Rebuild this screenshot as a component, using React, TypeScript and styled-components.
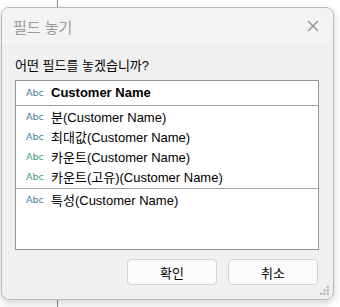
import React from "react";
import styled, { createGlobalStyle } from "styled-components";

const GlobalStyle = createGlobalStyle`
  html, body {
    margin: 0;
    padding: 0;
    background: #ffffff;
    width: 340px;
    height: 307px;
    overflow: hidden;
    font-family: "Liberation Sans", "Noto Sans CJK KR", sans-serif;
  }
`;

const FONT = `"Liberation Sans", "Noto Sans CJK KR", sans-serif`;

const Stage = styled.div`
  position: relative;
  width: 340px;
  height: 307px;
  padding: 7px 0 0 1px;
  box-sizing: border-box;
`;

const BackLine = styled.div`
  position: absolute;
  left: 57px;
  top: 0;
  bottom: 0;
  width: 1px;
  background: #8c8c8c;
`;

const Window = styled.div`
  position: relative;
  width: 333px;
  height: 293px;
  box-sizing: border-box;
  border: 1px solid #b9b9b9;
  border-radius: 8px;
  background: #f0f0f0;
  box-shadow: 0 3px 8px rgba(0, 0, 0, 0.18);
  display: flex;
  flex-direction: column;
  overflow: hidden;
`;

const TitleBar = styled.div`
  height: 36px;
  flex: none;
  display: flex;
  align-items: center;
  justify-content: space-between;
  padding: 0 14px 0 11px;
  background: #f3f3f3;
`;

const Title = styled.span`
  font-family: ${FONT};
  font-size: 15px;
  color: #9a9a9a;
`;

const Close = styled.svg`
  width: 12px;
  height: 12px;
`;

const Body = styled.div`
  flex: 1;
  display: flex;
  flex-direction: column;
  padding: 13px 13px 0 13px;
`;

const Prompt = styled.div`
  font-family: ${FONT};
  font-size: 13px;
  line-height: 18px;
  color: #000;
  margin-bottom: 5px;
`;

const ListBox = styled.div`
  width: 304px;
  height: 170px;
  box-sizing: border-box;
  border: 1px solid #8e959c;
  background: #ffffff;
  display: flex;
  flex-direction: column;
`;

const Group = styled.div<{ $divider?: boolean; $pad?: string }>`
  display: flex;
  flex-direction: column;
  padding: ${(p) => p.$pad ?? "0"};
  border-bottom: ${(p) => (p.$divider ? "1px solid #9ea3a8" : "none")};
`;

const Row = styled.div`
  height: 20px;
  display: flex;
  align-items: center;
  padding-left: 10px;
  gap: 8px;
`;

const Tag = styled.span<{ $tone: "blue" | "green" }>`
  width: 17px;
  font-family: "DejaVu Sans", sans-serif;
  font-size: 9.5px;
  color: ${(p) => (p.$tone === "green" ? "#3e9f7a" : "#3f7ea3")};
`;

const Label = styled.span<{ $bold?: boolean }>`
  font-family: ${FONT};
  font-size: 13px;
  font-weight: ${(p) => (p.$bold ? 700 : 400)};
  color: #000;
  white-space: nowrap;
`;

const Footer = styled.div`
  display: flex;
  justify-content: flex-end;
  gap: 11px;
  padding: 9px 2px 0 0;
`;

const Button = styled.button`
  width: 90px;
  height: 26px;
  box-sizing: border-box;
  border: 1px solid #d0d0d0;
  border-radius: 4px;
  background: #fbfbfb;
  font-family: ${FONT};
  font-size: 13px;
  color: #000;
  padding: 0;
`;

const Grip = styled.svg`
  position: absolute;
  right: 3px;
  bottom: 3px;
  width: 10px;
  height: 10px;
`;

const rows: { tone: "blue" | "green"; text: string }[] = [
  { tone: "blue", text: "분(Customer Name)" },
  { tone: "blue", text: "최대값(Customer Name)" },
  { tone: "green", text: "카운트(Customer Name)" },
  { tone: "green", text: "카운트(고유)(Customer Name)" },
];

const gripDots = [
  [6, 0],
  [3, 3],
  [6, 3],
  [0, 6],
  [3, 6],
  [6, 6],
];

const App: React.FC = () => (
  <Stage>
    <GlobalStyle />
    <BackLine />
    <Window>
      <TitleBar>
        <Title>필드 놓기</Title>
        <Close viewBox="0 0 12 12">
          <path d="M1 1 L11 11 M11 1 L1 11" stroke="#8a8a8a" strokeWidth="1.1" />
        </Close>
      </TitleBar>
      <Body>
        <Prompt>어떤 필드를 놓겠습니까?</Prompt>
        <ListBox>
          <Group $divider $pad="1px 0 3px">
            <Row>
              <Tag $tone="blue">Abc</Tag>
              <Label $bold>Customer Name</Label>
            </Row>
          </Group>
          <Group $divider $pad="0 0 2px">
            {rows.map((r) => (
              <Row key={r.text}>
                <Tag $tone={r.tone}>Abc</Tag>
                <Label>{r.text}</Label>
              </Row>
            ))}
          </Group>
          <Group>
            <Row>
              <Tag $tone="blue">Abc</Tag>
              <Label>특성(Customer Name)</Label>
            </Row>
          </Group>
        </ListBox>
        <Footer>
          <Button>확인</Button>
          <Button>취소</Button>
        </Footer>
      </Body>
      <Grip viewBox="0 0 9 9">
        {gripDots.map(([x, y]) => (
          <rect key={`${x}-${y}`} x={x} y={y} width="2" height="2" fill="#b8b8b8" />
        ))}
      </Grip>
    </Window>
  </Stage>
);

export default App;
